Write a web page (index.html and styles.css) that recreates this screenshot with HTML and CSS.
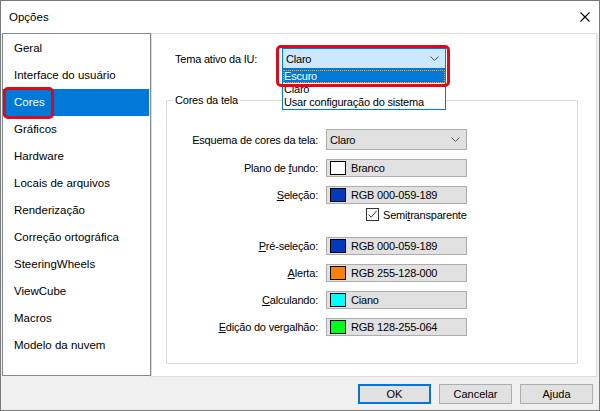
FILE: index.html
```html
<!DOCTYPE html>
<html lang="pt">
<head>
    <meta charset="UTF-8">
    <title>Opções</title>
    <link rel="stylesheet" href="styles.css">
</head>
<body>
    <div class="window">
        <div class="titlebar">
            <span class="title">Opções</span>
            <svg class="close" width="10" height="10" viewBox="0 0 10 10">
                <path d="M0.5 0.5 L9.5 9.5 M9.5 0.5 L0.5 9.5" stroke="#000" stroke-width="1.1" fill="none"/>
            </svg>
        </div>

        <div class="main">
            <ul class="nav">
                <li>Geral</li>
                <li>Interface do usuário</li>
                <li class="active">Cores<span class="mark mark-nav"></span></li>
                <li>Gráficos</li>
                <li>Hardware</li>
                <li>Locais de arquivos</li>
                <li>Renderização</li>
                <li>Correção ortográfica</li>
                <li>SteeringWheels</li>
                <li>ViewCube</li>
                <li>Macros</li>
                <li>Modelo da nuvem</li>
            </ul>

            <div class="panel">
                <div class="theme-row">
                    <span class="theme-label">Tema ativo da IU:</span>
                    <div class="combo">
                        <span>Claro</span>
                        <svg class="chevron" width="9" height="5" viewBox="0 0 9 5">
                            <path d="M0.5 0.5 L4.5 4.5 L8.5 0.5" stroke="#555" fill="none"/>
                        </svg>
                        <ul class="combo-list">
                            <li class="hl">Escuro</li>
                            <li>Claro</li>
                            <li>Usar configuração do sistema</li>
                        </ul>
                        <span class="mark mark-combo"></span>
                    </div>
                </div>

                <div class="group">
                    <div class="group-title">Cores da tela</div>

                    <div class="row row-first">
                        <span class="label">Esquema de cores da tela:</span>
                        <div class="select">
                            <span>Claro</span>
                            <svg class="chevron" width="9" height="5" viewBox="0 0 9 5">
                                <path d="M0.5 0.5 L4.5 4.5 L8.5 0.5" stroke="#555" fill="none"/>
                            </svg>
                        </div>
                    </div>

                    <div class="row">
                        <span class="label">Plano de <u>f</u>undo:</span>
                        <div class="field"><span class="swatch" style="background: #ffffff"></span>Branco</div>
                    </div>

                    <div class="row">
                        <span class="label"><u>S</u>eleção:</span>
                        <div class="field"><span class="swatch" style="background: #003bbd"></span>RGB 000-059-189</div>
                    </div>

                    <div class="check-row">
                        <span class="checkbox">
                            <svg width="11" height="11" viewBox="0 0 11 11">
                                <path d="M1.5 5.5 L4.2 8.2 L9.5 2" stroke="#333" stroke-width="1" fill="none"/>
                            </svg>
                        </span>
                        <span>Semi<u>t</u>ransparente</span>
                    </div>

                    <div class="row row-gap">
                        <span class="label"><u>P</u>ré-seleção:</span>
                        <div class="field"><span class="swatch" style="background: #003bbd"></span>RGB 000-059-189</div>
                    </div>

                    <div class="row">
                        <span class="label"><u>A</u>lerta:</span>
                        <div class="field"><span class="swatch" style="background: #ff8000"></span>RGB 255-128-000</div>
                    </div>

                    <div class="row">
                        <span class="label"><u>C</u>alculando:</span>
                        <div class="field"><span class="swatch" style="background: #00ffff"></span>Ciano</div>
                    </div>

                    <div class="row">
                        <span class="label"><u>E</u>dição do vergalhão:</span>
                        <div class="field"><span class="swatch" style="background: #00ff18"></span>RGB 128-255-064</div>
                    </div>
                </div>
            </div>
        </div>

        <div class="footer">
            <button class="btn btn-default">OK</button>
            <button class="btn">Cancelar</button>
            <button class="btn">Ajuda</button>
        </div>
    </div>
</body>
</html>
```

FILE: styles.css
```css
body {
    margin: 0;
    font-family: 'Liberation Sans', Arial, sans-serif;
    color: #000;
    background: #f0f0f0;
}

.window {
    width: 600px;
    height: 411px;
    box-sizing: border-box;
    border: 1px solid #7a7a7a;
    background: #f0f0f0;
    display: flex;
    flex-direction: column;
}

.titlebar {
    height: 31px;
    background: #fff;
    display: flex;
    align-items: center;
    justify-content: space-between;
    padding: 0 9px 1px 8px;
}

.title {
    font-size: 11.5px;
}

.close {
    display: block;
    margin-top: 1px;
}

.main {
    display: flex;
    padding: 0 2px 0 1px;
}

/* left category list */
.nav {
    list-style: none;
    margin: 0;
    padding: 1px 1px 0 0;
    width: 149px;
    height: 343px;
    box-sizing: border-box;
    border: 1px solid #828790;
    background: #fff;
    font-size: 11.5px;
}

.nav li {
    height: 27px;
    line-height: 27px;
    padding-left: 11px;
    position: relative;
}

.nav li.active {
    background: #0078d7;
    color: #fff;
}

.mark {
    position: absolute;
    box-sizing: border-box;
    border: 3px solid #dc0a1e;
    border-radius: 5px;
}

.mark-nav {
    left: 0;
    top: -2px;
    width: 51px;
    height: 32px;
}

/* right page */
.panel {
    width: 446px;
    height: 344px;
    box-sizing: border-box;
    border: 1px solid #dcdcdc;
    background: #fff;
    padding: 14px 0 0 14px;
    font-size: 11px;
    letter-spacing: -0.2px;
}

.theme-row {
    display: flex;
    align-items: center;
    padding-left: 9px;
}

.theme-label {
    width: 107px;
}

.combo {
    position: relative;
    width: 164px;
    height: 21px;
    box-sizing: border-box;
    border: 1px solid #0078d7;
    background: #cce8ff;
    display: flex;
    align-items: center;
    justify-content: space-between;
    padding: 0 6px 0 3px;
}

.combo-list {
    position: absolute;
    left: -1px;
    top: 20px;
    width: 164px;
    margin: 0;
    padding: 0;
    list-style: none;
    box-sizing: border-box;
    border: 1px solid #0078d7;
    background: #fff;
    z-index: 2;
}

.combo-list li {
    height: 13px;
    line-height: 13px;
    padding-left: 1px;
}

.combo-list li.hl {
    background: #0078d7;
    color: #fff;
    outline: 1px dotted #f0a830;
    outline-offset: -1px;
}

.mark-combo {
    left: -7px;
    top: -4px;
    width: 174px;
    height: 42px;
    z-index: 3;
}

/* group box */
.group {
    margin-top: 31px;
    width: 412px;
    height: 264px;
    box-sizing: border-box;
    border: 1px solid #dcdcdc;
}

.group-title {
    display: table;
    margin: -7px 0 0 6px;
    padding: 0 2px;
    line-height: 13px;
    background: #fff;
}

.row {
    display: flex;
    align-items: center;
    margin-top: 9px;
}

.row-first {
    margin-top: 22px;
    margin-bottom: 1px;
}

.row-gap {
    margin-top: 16px;
}

.label {
    width: 151px;
    text-align: right;
    margin-right: 8px;
}

.select {
    width: 141px;
    height: 21px;
    box-sizing: border-box;
    border: 1px solid #adadad;
    background: #e1e1e1;
    display: flex;
    align-items: center;
    justify-content: space-between;
    padding: 0 6px 0 3px;
}

.field {
    width: 141px;
    height: 18px;
    box-sizing: border-box;
    border: 1px solid #adadad;
    background: #e1e1e1;
    display: flex;
    align-items: center;
    padding-left: 3px;
}

.swatch {
    width: 16px;
    height: 14px;
    box-sizing: border-box;
    border: 1px solid #000;
    margin-right: 5px;
}

.check-row {
    display: flex;
    align-items: center;
    margin-top: 4px;
    padding-left: 199px;
}

.checkbox {
    width: 13px;
    height: 13px;
    box-sizing: border-box;
    border: 1px solid #333;
    background: #fff;
    margin-right: 4px;
    display: flex;
    align-items: center;
    justify-content: center;
}

.checkbox svg {
    display: block;
}

/* bottom buttons */
.footer {
    flex: 1;
    display: flex;
    justify-content: flex-end;
    gap: 8px;
    padding: 7px 6px 0 0;
}

.btn {
    width: 73px;
    height: 20px;
    box-sizing: border-box;
    border: 1px solid #adadad;
    background: #e1e1e1;
    font-family: 'Liberation Sans', Arial, sans-serif;
    font-size: 11px;
    padding: 0;
}

.btn-default {
    border: 2px solid #0078d7;
}
```
